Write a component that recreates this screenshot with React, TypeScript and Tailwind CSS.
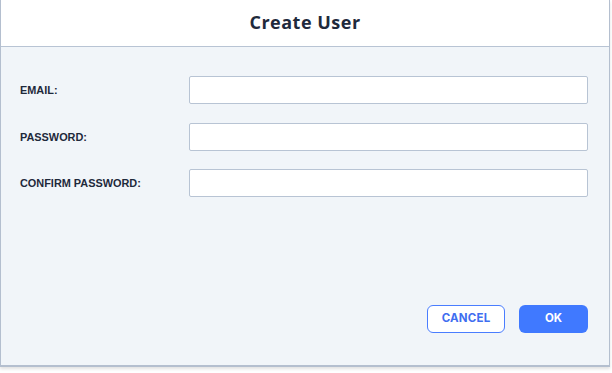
import type { ReactNode } from "react";

// Create User dialog: header + three labelled inputs + action buttons.

const FIELDS = ["EMAIL:", "PASSWORD:", "CONFIRM PASSWORD:"];

function Row({ label, children }: { label: string; children: ReactNode }) {
  return (
    <>
      <label className="flex items-center pt-[1px] text-[10.9px] font-bold text-[#1e293b] [font-family:'Liberation_Sans',Arial,sans-serif]">
        {label}
      </label>
      {children}
    </>
  );
}

export default function App() {
  return (
    <div className="w-[612px] h-[373px] bg-white">
      <div className="w-[610px] h-[367px] flex flex-col border-x border-b-2 border-[#b4bfcf] shadow-[0_2px_3px_rgba(0,0,0,0.12)]">
        {/* header */}
        <div className="h-[47px] shrink-0 flex items-center justify-center bg-white border-b border-[#b8c4d4]">
          <h1 className="text-[18px] font-bold tracking-[0.5px] text-[#1f2a3c] [font-family:'Open_Sans',sans-serif] pb-[1px]">
            Create User
          </h1>
        </div>

        {/* body */}
        <div className="flex-1 flex flex-col bg-[#f1f5f9] pl-[19px] pr-[21px] pt-[29px] pb-[32px]">
          <div className="grid grid-cols-[169px_1fr] gap-y-[18.5px]">
            {FIELDS.map(f => (
              <Row key={f} label={f}>
                <input
                  type={f === "EMAIL:" ? "text" : "password"}
                  className="h-[28px] w-full bg-white border border-[#b8c4d4] rounded-[2px] outline-none px-2 text-sm"
                />
              </Row>
            ))}
          </div>

          <div className="mt-auto flex justify-end gap-[14px] [font-family:Inter,sans-serif]">
            <button className="w-[78px] h-[28px] rounded-[6px] border border-[#4a7dff] bg-white text-[#3f6ef0] text-[11.5px] font-bold tracking-[0.2px]">
              CANCEL
            </button>
            <button className="w-[69px] h-[28px] rounded-[6px] bg-[#4079ff] text-white text-[11.5px] font-bold">
              OK
            </button>
          </div>
        </div>
      </div>
    </div>
  );
}
